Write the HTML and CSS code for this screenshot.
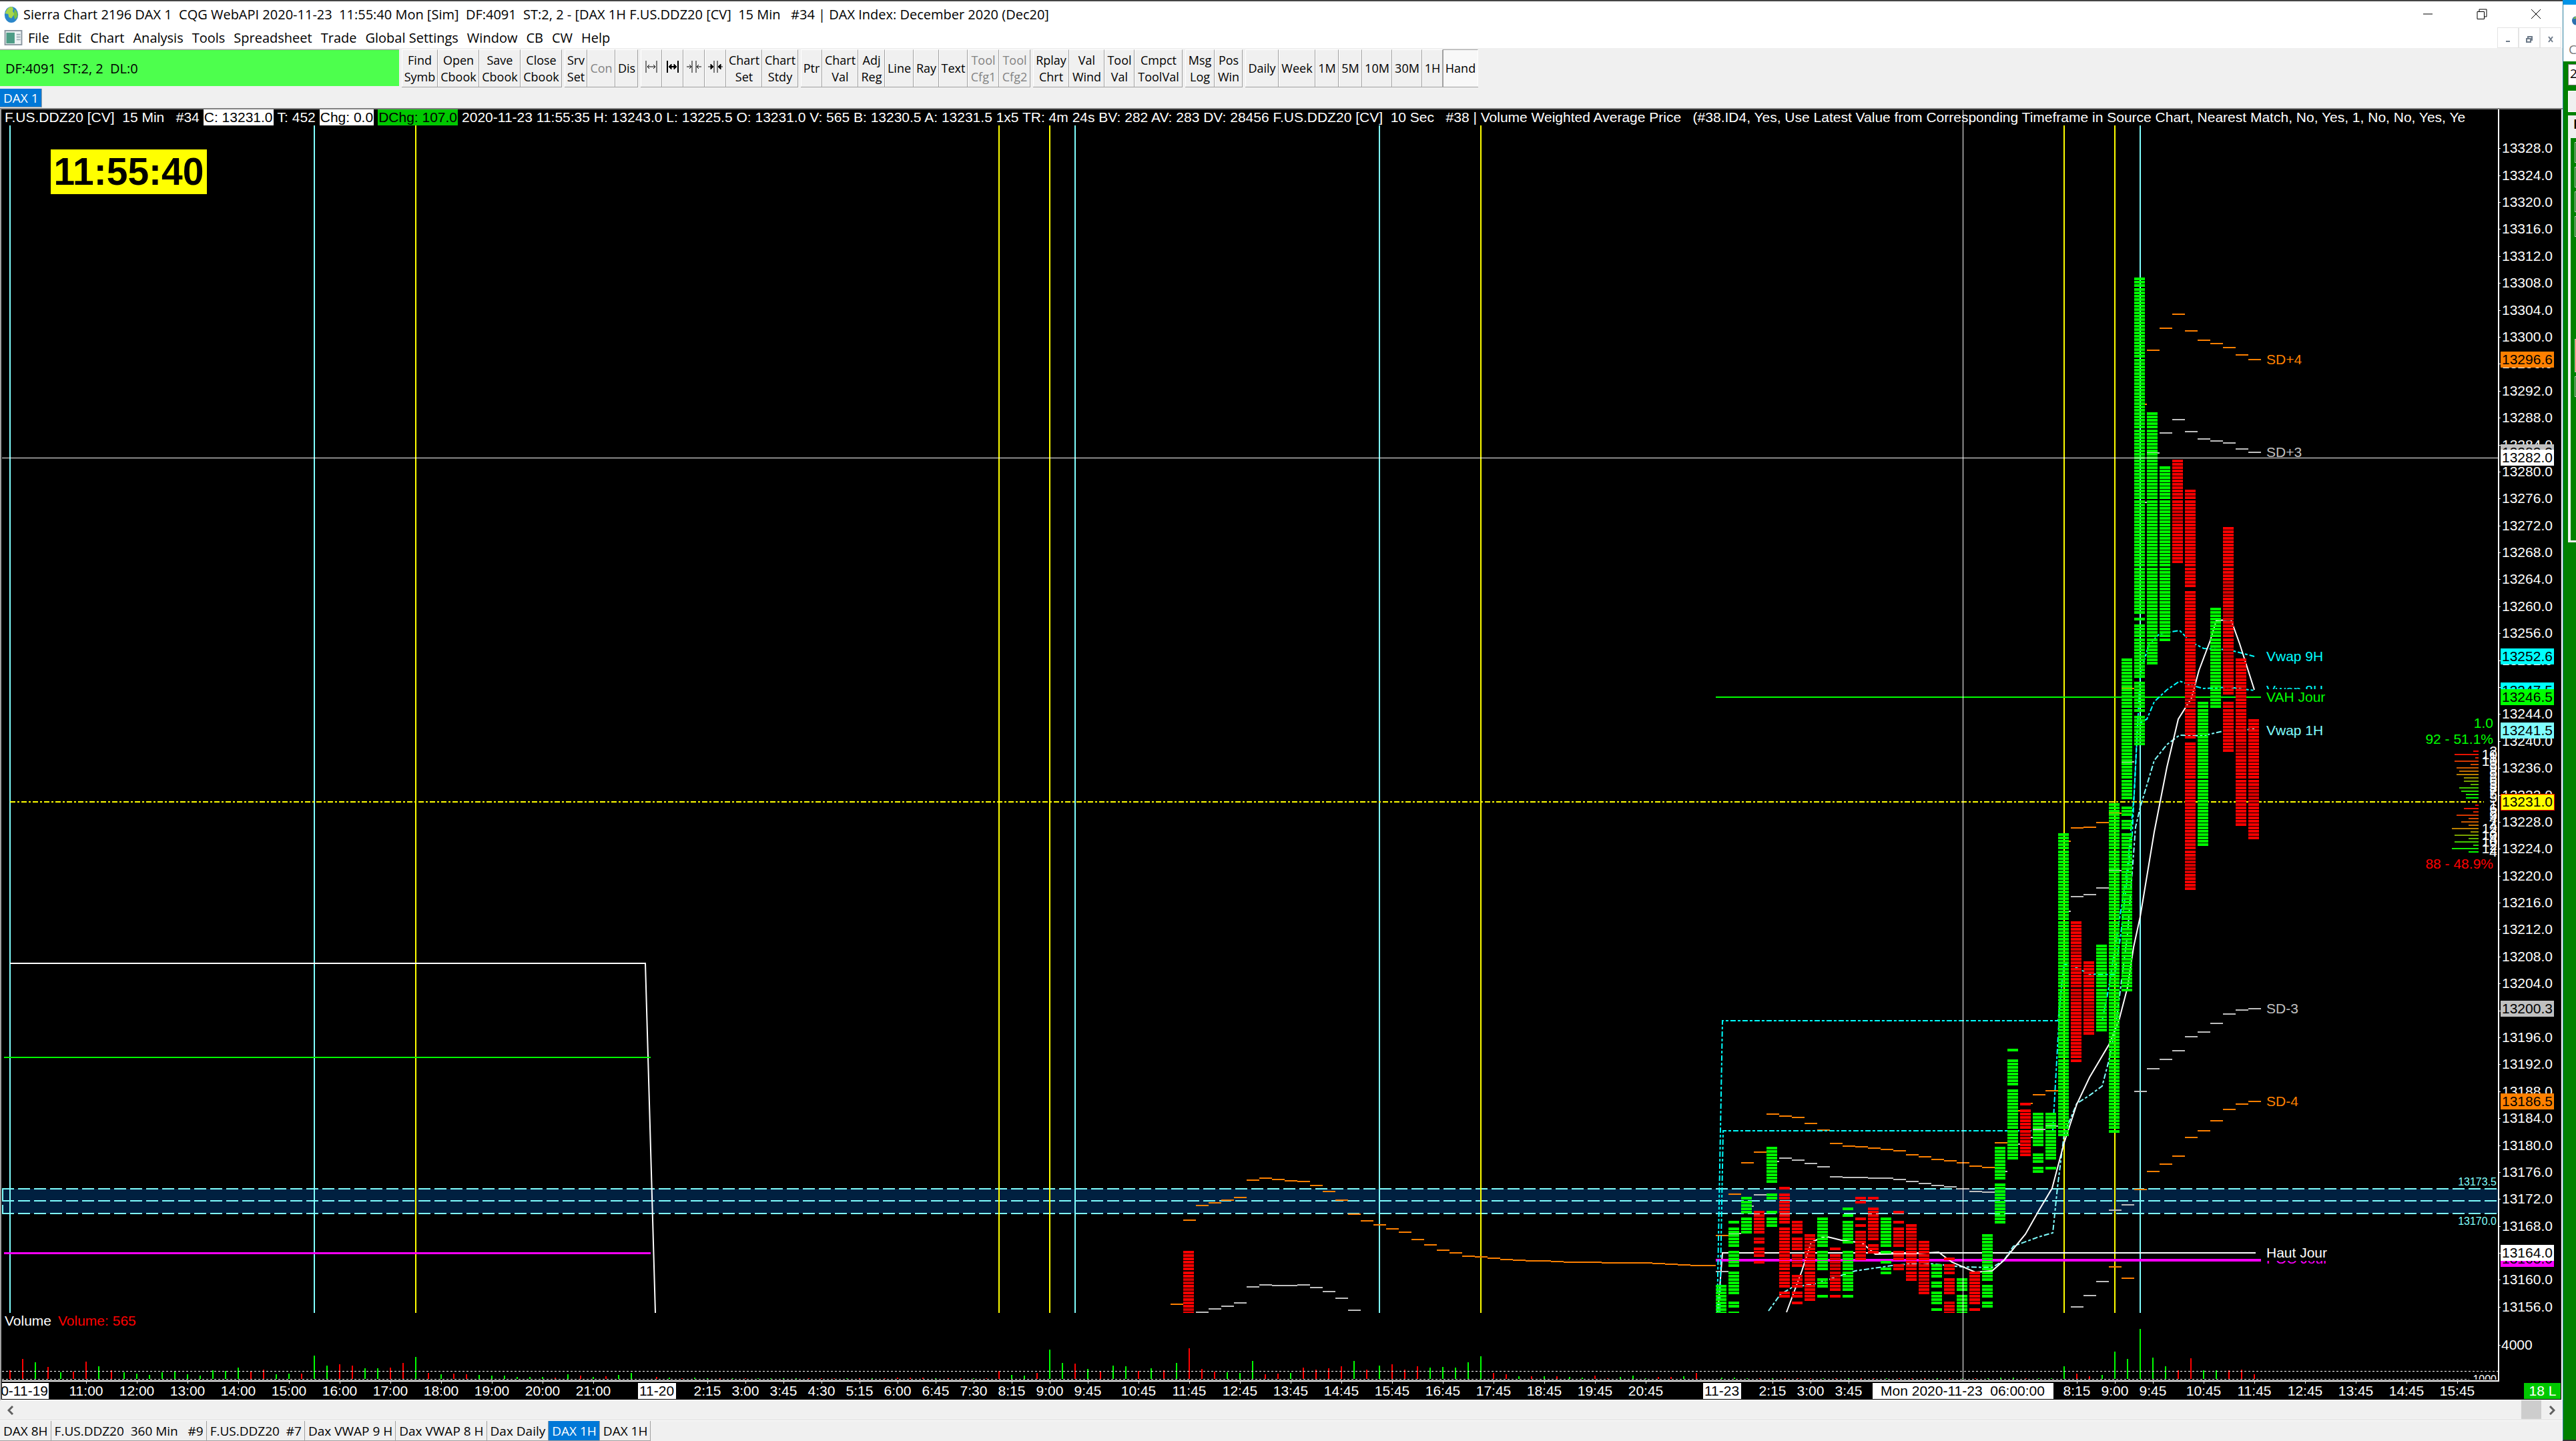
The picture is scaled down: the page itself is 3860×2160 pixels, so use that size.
FILE: index.html
```
<!DOCTYPE html>
<html lang="en">
	<head>
		<meta charset="utf-8">
		<title>Sierra Chart 2196 DAX 1</title>
		<link rel="stylesheet" href="styles.css">
	</head>

	<body>
		<div class="desktop">
			<main class="window">
				<header class="title-bar">
					<svg class="app-icon" viewBox="0 0 24 28">
						<ellipse cx="12" cy="14" rx="11" ry="13" fill="#2b86c9"/>
						<path d="M2 12 Q5 2 12 1 Q17 3 14 8 L17 13 L12 20 L8 18 L7 13 Z" fill="#a8d84a"/>
						<path d="M17 5 Q23 9 22 17 L18 22 L16 16 Z" fill="#7cc142"/>
					</svg>
					<h1 class="title">Sierra Chart 2196 DAX 1  CQG WebAPI 2020-11-23  11:55:40 Mon [Sim]  DF:4091  ST:2, 2 - [DAX 1H F.US.DDZ20 [CV]  15 Min   #34 | DAX Index: December 2020 (Dec20]</h1>
					<div class="window-buttons">
						<button type="button" aria-label="Minimize"><svg viewBox="0 0 16 16"><path d="M1 8h14"/></svg></button>
						<button type="button" aria-label="Restore"><svg viewBox="0 0 16 16"><path d="M1 4.500h10.500v11H1zM4 4V1h11v11h-3"/></svg></button>
						<button type="button" aria-label="Close"><svg viewBox="0 0 16 16"><path d="M1 1l14 14M15 1L1 15"/></svg></button>
					</div>
				</header>

				<nav class="menu-bar">
					<svg class="doc-icon" viewBox="0 0 28 24">
						<rect x="1" y="1" width="26" height="22" fill="#eef3f5" stroke="#8b97a0" stroke-width="2"/>
						<rect x="3" y="4" width="13" height="17" fill="#4d9c86"/>
						<path d="M19 7h6M19 11h6M19 15h6" stroke="#9fb0b8" stroke-width="2"/>
					</svg>
					<button type="button">File</button>
					<button type="button">Edit</button>
					<button type="button">Chart</button>
					<button type="button">Analysis</button>
					<button type="button">Tools</button>
					<button type="button">Spreadsheet</button>
					<button type="button">Trade</button>
					<button type="button">Global Settings</button>
					<button type="button">Window</button>
					<button type="button">CB</button>
					<button type="button">CW</button>
					<button type="button">Help</button>
					<div class="mdi-buttons">
						<button type="button" aria-label="Minimize chart"><svg viewBox="0 0 10 10"><path d="M2 8h6"/></svg></button>
						<button type="button" aria-label="Restore chart"><svg viewBox="0 0 10 10"><path d="M1 4h6v5H1zM3 4V1h6v5H7"/></svg></button>
						<button type="button" aria-label="Close chart"><svg viewBox="0 0 10 10"><path d="M2 1l6 8M8 1L2 9"/></svg></button>
					</div>
				</nav>

				<div class="toolbar">
					<output class="status">DF:4091  ST:2, 2  DL:0</output>
					<div class="group group-book">
						<button type="button">Find<br>Symb</button>
						<button type="button">Open<br>Cbook</button>
						<button type="button">Save<br>Cbook</button>
						<button type="button">Close<br>Cbook</button>
					</div>
					<div class="group group-server">
						<button type="button">Srv<br>Set</button>
						<button type="button" disabled>Con</button>
						<button type="button">Dis</button>
					</div>
					<div class="group group-spacing">
						<button type="button" aria-label="Widen bars"><svg viewBox="0 0 22 18"><path d="M3 0v18M19 0v18M5 9h12M8 6L5 9l3 3M14 6l3 3-3 3"/></svg></button>
						<button type="button" aria-label="Widen bars more"><svg viewBox="0 0 22 18"><path d="M3 0v18M19 0v18M5 9h12" stroke-width="2"/><path d="M9 5L5 9l4 4zM13 5l4 4-4 4z" fill="#000"/></svg></button>
						<button type="button" aria-label="Narrow bars"><svg viewBox="0 0 22 18"><path d="M8 0v18M14 0v18M0 9h7M22 9h-7M4 6l3 3-3 3M18 6l-3 3 3 3"/></svg></button>
						<button type="button" aria-label="Narrow bars more"><svg viewBox="0 0 22 18"><path d="M9 0v18M14 0v18M0 9h8M22 9h-7"/><path d="M4 5l4 4-4 4zM19 5l-4 4 4 4z" fill="#000"/></svg></button>
						<button type="button">Chart<br>Set</button>
						<button type="button">Chart<br>Stdy</button>
					</div>
					<div class="group group-draw">
						<button type="button">Ptr</button>
						<button type="button">Chart<br>Val</button>
						<button type="button">Adj<br>Reg</button>
						<button type="button">Line</button>
						<button type="button">Ray</button>
						<button type="button">Text</button>
						<button type="button" disabled>Tool<br>Cfg1</button>
						<button type="button" disabled>Tool<br>Cfg2</button>
					</div>
					<div class="group group-values">
						<button type="button">Rplay<br>Chrt</button>
						<button type="button">Val<br>Wind</button>
						<button type="button">Tool<br>Val</button>
						<button type="button">Cmpct<br>ToolVal</button>
					</div>
					<div class="group group-log">
						<button type="button">Msg<br>Log</button>
						<button type="button">Pos<br>Win</button>
					</div>
					<div class="group group-period">
						<button type="button">Daily</button>
						<button type="button">Week</button>
						<button type="button">1M</button>
						<button type="button">5M</button>
						<button type="button">10M</button>
						<button type="button">30M</button>
						<button type="button">1H</button>
						<button type="button" class="pressed">Hand</button>
					</div>
				</div>

				<div class="book-tabs">
					<button type="button" class="tab active">DAX 1</button>
				</div>

				<section class="chart">
					<div class="caption"><span>F.US.DDZ20 [CV]  15 Min   #34</span><span class="tag white">C: 13231.0</span><span>T: 452</span><span class="tag white">Chg: 0.0</span><span class="tag green">DChg: 107.0</span><span>2020-11-23 11:55:35 H: 13243.0 L: 13225.5 O: 13231.0 V: 565 B: 13230.5 A: 13231.5 1x5 TR: 4m 24s BV: 282 AV: 283 DV: 28456 F.US.DDZ20 [CV]  10 Sec   #38 | Volume Weighted Average Price   (#38.ID4, Yes, Use Latest Value from Corresponding Timeframe in Source Chart, Nearest Match, No, Yes, 1, No, No, Yes, Ye</span></div>
					<svg class="plot" id="plot" viewBox="2 188 3836 1910" preserveAspectRatio="none"></svg>
				</section>

				<div class="scroll">
					<button type="button" aria-label="Scroll left"><svg viewBox="0 0 10 14"><path d="M8 1L2 7l6 6"/></svg></button>
					<div class="track"><div class="thumb"></div></div>
					<button type="button" aria-label="Scroll right"><svg viewBox="0 0 10 14"><path d="M2 1l6 6-6 6"/></svg></button>
				</div>

				<div class="chart-tabs">
					<button type="button" class="tab">DAX 8H</button>
					<button type="button" class="tab">F.US.DDZ20  360 Min   #9</button>
					<button type="button" class="tab">F.US.DDZ20  #7</button>
					<button type="button" class="tab">Dax VWAP 9 H</button>
					<button type="button" class="tab">Dax VWAP 8 H</button>
					<button type="button" class="tab">Dax Daily</button>
					<button type="button" class="tab active">DAX 1H</button>
					<button type="button" class="tab">DAX 1H</button>
				</div>
			</main>

			<aside class="side-window">
				<div class="side-title">
					<svg viewBox="0 0 12 28"><ellipse cx="11" cy="14" rx="11" ry="13" fill="#2b6fae"/><path d="M3 9Q7 2 12 2v5z" fill="#8cc63f"/></svg>
					<span>C</span>
				</div>
				<div class="side-field">2</div>
				<div class="side-button"></div>
				<div class="side-panel">
					<div class="side-tab">N</div>
					<div class="side-box"></div>
					<div class="side-box"></div>
					<div class="side-box"></div>
					<div class="side-box"></div>
					<div class="side-box alert"></div>
					<div class="side-box"></div>
				</div>
			</aside>
		</div>

		<script src="chart.js"></script>
	</body>
</html>
```
FILE: styles.css
```
* {
	box-sizing: border-box;
}

body {
	margin: 0;
	font-family: "Open Sans", "Noto Sans", sans-serif;
	font-size: 19px;
	color: #000;
}

button {
	margin: 0;
	padding: 0;
	border: none;
	background: none;
	font: inherit;
	color: inherit;
}

.desktop {
	display: flex;
	height: 100vh;
	background: #f0f0f0;
}

.window {
	flex: 1;
	min-width: 0;
	display: flex;
	flex-direction: column;
	border-top: 2px solid #444;
}

/* title and menu */
.title-bar {
	display: flex;
	align-items: center;
	height: 39px;
	padding-left: 4px;
	background: #fff;
}

.app-icon {
	width: 26px;
	height: 26px;
	margin-right: 5px;
}

.title {
	flex: 1;
	margin: 0;
	font-size: 20px;
	font-weight: normal;
	white-space: pre;
	overflow: hidden;
}

.window-buttons {
	display: flex;
}

.window-buttons button {
	width: 81px;
	height: 36px;
}

.window-buttons svg {
	width: 16px;
	height: 16px;
	fill: none;
	stroke: #000;
}

.menu-bar {
	display: flex;
	align-items: center;
	gap: 13px;
	height: 31px;
	padding-left: 6px;
	background: #fff;
	font-size: 20px;
}

.doc-icon {
	width: 28px;
	height: 23px;
	margin-right: -5px;
}

.mdi-buttons {
	display: flex;
	margin-left: auto;
	padding-right: 2px;
}

.mdi-buttons button {
	width: 32px;
	height: 31px;
	border: 1px solid #e4e4e4;
}

.mdi-buttons svg {
	width: 10px;
	height: 10px;
	fill: none;
	stroke: #6e7b8a;
	stroke-width: 2;
}

/* toolbar */
.toolbar {
	display: flex;
	gap: 4px;
	height: 60px;
	padding: 2px 0 1px;
	font-size: 18px;
	line-height: 25px;
}

.status {
	display: flex;
	align-items: center;
	width: 598px;
	margin-bottom: 2px;
	padding-left: 8px;
	border-top: 1px solid #999;
	background: #4dff4d;
	font-size: 20px;
	white-space: pre;
}

.group {
	display: grid;
	border-bottom: 1px solid #a0a0a0;
}

.group button {
	overflow: hidden;
	white-space: nowrap;
	border-top: 1px solid #fff;
	border-left: 1px solid #fff;
	border-right: 1px solid #a0a0a0;
}

.group button:disabled {
	color: #838383;
}

.group .pressed {
	background: #f8f8f8;
	border-top-color: #a0a0a0;
	border-left-color: #a0a0a0;
	border-right-color: #fff;
}

.group svg {
	width: 22px;
	height: 18px;
	fill: none;
	stroke: #000;
}

.group-book {
	grid-template-columns: 54px repeat(3, 62px);
}

.group-server {
	grid-template-columns: 34px 42px 34px;
}

.group-spacing {
	grid-template-columns: repeat(4, 32px) 54px 54px;
}

.group-draw {
	grid-template-columns: 32px 54px 40px 43px 38px 43px 47px 47px;
}

.group-values {
	grid-template-columns: 54px 53px 45px 72px;
}

.group-log {
	grid-template-columns: 44px 42px;
}

.group-period {
	grid-template-columns: 50px 55px 35px 35px 45px 45px 31px 53px;
}

/* tabs */
.book-tabs {
	display: flex;
	height: 32px;
	padding: 1px 0;
	border-bottom: 2px solid #808080;
}

.tab {
	padding: 0 4px 0 5px;
	white-space: pre;
	border-right: 1px solid #a0a0a0;
	border-bottom: 1px solid #a0a0a0;
}

.tab.active {
	background: #0078d7;
	color: #fff;
}

.chart-tabs {
	display: flex;
	height: 31px;
	border-top: 1px solid #fff;
}

/* chart */
.chart {
	flex: 1;
	min-height: 0;
	display: flex;
	flex-direction: column;
	background: #000;
	border-left: 2px solid #a0a0a0;
	border-right: 2px solid #fff;
	border-bottom: 1px solid #fff;
	font-family: "Liberation Sans", Arial, sans-serif;
	font-size: 21px;
}

.caption {
	display: flex;
	gap: 6px;
	height: 24px;
	margin-right: 95px;
	padding-left: 5px;
	line-height: 24px;
	color: #fff;
	white-space: pre;
	overflow: hidden;
}

.tag {
	padding: 0 1px;
	color: #000;
}

.tag.white {
	background: #fff;
}

.tag.green {
	background: #00c800;
}

.plot {
	flex: 1;
	min-height: 0;
	width: 100%;
	overflow: visible;
}

.plot text {
	font-family: "Liberation Sans", Arial, sans-serif;
	font-size: 21px;
	white-space: pre;
}

.plot .small {
	font-size: 16px;
}

.plot .clock {
	font-size: 57px;
	font-weight: bold;
}

.plot rect,
.plot line {
	shape-rendering: crispEdges;
}

/* scroll bar */
.scroll {
	display: flex;
	height: 30px;
	border-bottom: 1px solid #dcdcdc;
}

.scroll button {
	width: 32px;
}

.scroll svg {
	width: 10px;
	height: 14px;
	fill: none;
	stroke: #606060;
	stroke-width: 3;
}

.track {
	flex: 1;
	display: flex;
	justify-content: flex-end;
}

.thumb {
	width: 30px;
	height: 28px;
	background: #cdcdcd;
}

/* window on the right edge */
.side-window {
	width: 20px;
	overflow: hidden;
	background: #008000;
	border-left: 1px solid #2b7f9e;
	border-top: 7px solid #0094e8;
	border-bottom: 2px solid #333;
}

.side-title {
	display: flex;
	flex-direction: column;
	align-items: flex-end;
	height: 85px;
	padding-top: 12px;
	background: #fff;
	color: #777;
}

.side-title svg {
	width: 6px;
	height: 24px;
}

.side-title span {
	width: 11px;
	margin-top: 18px;
}

.side-field,
.side-button {
	height: 32px;
	margin: 4px 0 8px 7px;
	padding-left: 2px;
	background: #fff;
	border: 1px solid #777;
	border-right: none;
}

.side-button {
	margin-bottom: 5px;
	background: #f0f0f0;
	border-color: #fff;
}

.side-panel {
	display: flex;
	flex-direction: column;
	gap: 6px;
	height: 640px;
	margin-left: 7px;
	border-left: 4px solid #f0f0f0;
	border-bottom: 3px solid #f0f0f0;
}

.side-tab {
	height: 34px;
	padding-left: 4px;
	background: #f0f0f0;
	font-weight: bold;
}

.side-box {
	height: 31px;
	margin-left: 6px;
	border: 1px solid #c8c8c8;
	border-right: none;
}

.side-box.alert {
	height: 50px;
	margin-top: 147px;
	background: #ff7f50;
}
```
FILE: chart.js
```
const plot = document.getElementById('plot');
const NS = 'http://www.w3.org/2000/svg';

const GREEN = '#00ff00';
const RED = '#ff0000';
const YELLOW = '#ffff00';
const CYAN = '#00ffff';
const PALE = '#80ffff';
const ORANGE = '#ff8000';
const GRAY = '#c0c0c0';
const WHITE = '#ffffff';
const PINK = '#ff00ff';

const TICK = 5.048;
const BOTTOM = 1968;
const AXIS_X = 3743;

// centre of bar number i, and height of a price
const barX = i => 15 + 19 * i;
const priceY = p => 222.3 + (13328 - p) * TICK * 2;

function add(name, attrs, content) {
	const el = document.createElementNS(NS, name);
	for (const key in attrs) el.setAttribute(key, attrs[key]);
	if (content !== undefined) el.textContent = content;
	plot.appendChild(el);
	return el;
}

function rect(x, y, width, height, fill) {
	return add('rect', { x, y, width, height, fill });
}

function line(x1, y1, x2, y2, stroke, width = 1, dash = '') {
	return add('line', { x1, y1, x2, y2, stroke, 'stroke-width': width, 'stroke-dasharray': dash });
}

function path(points, stroke, dash = '') {
	add('polyline', { points: points, fill: 'none', stroke, 'stroke-width': 2, 'stroke-dasharray': dash });
}

function label(x, y, text, fill, anchor = 'start', cls = '') {
	return add('text', { x, y: y + (cls === 'small' ? 6 : 7), fill, 'text-anchor': anchor, class: cls }, text);
}

// zone
rect(3, 1782, 3740, 37, '#002040');
[1782, 1800, 1819].forEach(y => line(3, y, AXIS_X, y, PALE, 2, '18 6'));
line(4, 1782, 4, 1819, PALE, 2, '18 6');

// session lines
[0, 24, 84, 108, 168].forEach(i => line(barX(i), 188, barX(i), BOTTOM, PALE, 2));
[32, 78, 82, 116, 162, 166].forEach(i => line(barX(i), 188, barX(i), BOTTOM, YELLOW, 2));

// levels of the day
path('15,1444 967,1444 982,1968', WHITE);
line(6, 1585, 975, 1585, GREEN, 2);
line(6, 1878, 975, 1878, PINK, 3);
line(2571, 1045, 3388, 1045, GREEN, 2);
path('2574,1968 2581,1878 3380,1878', WHITE);
line(2571, 1889, 3388, 1889, PINK, 4);
line(15, 1202, 3722, 1202, YELLOW, 2, '8 3 3 3');

// deviation bands, first bar then one height per bar
const bands = [
	[ORANGE, 92, [1955, 1829, 1807, 1803, 1799, 1795, 1769, 1766, 1768, 1770, 1771, 1777, 1786, 1799, 1820, 1830, 1836, 1842, 1847, 1858, 1866, 1874, 1878, 1883, 1884, 1886, 1888, 1889, 1890, 1890, 1891, 1892, 1892, 1892, 1893, 1893, 1893, 1893, 1894, 1895, 1896, 1897, 1897]],
	[ORANGE, 135, [1852, 1790, 1743, 1727, 1670, 1673, 1675, 1684, 1694, 1714, 1718, 1719, 1721, 1723, 1725, 1731, 1734, 1738, 1740, 1743, 1748, 1750, 1713, 1665, 1654, 1641, 1635, 1261, 1241, 1240, 1233, 1219, 1032, 606, 525, 492, 471, 496, 510, 515, 521, 532, 539]],
	[ORANGE, 166, [1899, 1916, 1783, 1756, 1745, 1733, 1705, 1695, 1680, 1663, 1655, 1651]],
	[GRAY, 94, [1967, 1962, 1958, 1953, 1929, 1926, 1927, 1927, 1926, 1930, 1936, 1946, 1964]],
	[GRAY, 135, [1906, 1849, 1808, 1791, 1741, 1736, 1739, 1744, 1749, 1764, 1765, 1765, 1766, 1766, 1768, 1771, 1774, 1777, 1779, 1782, 1786, 1787, 1756, 1715, 1705, 1693, 1688, 1366, 1344, 1341, 1331, 1305, 1142, 753, 679, 649, 629, 647, 658, 661, 664, 673, 678]],
	[GRAY, 163, [1959, 1942, 1921, 1814, 1806, 1636, 1602, 1588, 1575, 1554, 1547, 1534, 1520, 1514, 1512]]
];

bands.forEach(([color, first, ys]) => {
	ys.forEach((y, k) => rect(barX(first + k) - 9, y - 1, 19, 2, color));
});

// vwaps and average
path('2573,1968 2581,1530 3084,1530 3090,1470 3093,1445 3112,1451 3131,1460 3169,1461 3178,1400 3195,1250 3203,1085 3217,1078 3228,1052 3247,1034 3266,1021 3283,1027 3302,1032 3340,1030 3378,1035', CYAN, '8 3 4 3');
path('2577,1968 2582,1695 3076,1695 3087,1500 3090,1470', CYAN, '8 3 4 3');
path('3150,1530 3160,1480 3188,1300 3198,1190 3207,1010 3220,966 3236,950 3266,945 3283,962 3302,972 3340,974 3378,984', CYAN, '8 3 4 3');
path('2650,1965 2668,1940 2685,1930 2721,1924 2759,1912 2780,1905 2835,1897 2880,1893 2940,1899 2985,1900 3003,1889 3017,1868 3055,1854 3076,1848 3083,1780 3093,1700 3112,1654 3131,1642 3150,1628 3160,1590 3170,1540 3188,1400 3200,1240 3207,1210 3228,1140 3247,1116 3266,1102 3300,1103 3331,1096 3378,1093', PALE, '8 3 4 3');
path('2677,1967 2700,1905 2714,1862 2735,1853 2759,1859 2790,1863 2810,1880 2870,1879 2905,1877 2925,1892 2960,1907 2985,1905 3003,1889 3035,1850 3056,1813 3075,1781 3093,1713 3112,1655 3131,1615 3160,1566 3175,1530 3188,1480 3197,1420 3207,1374 3228,1247 3247,1150 3264,1078 3284,1046 3295,1005 3312,960 3321,930 3343,929 3356,965 3378,1034', WHITE);

// bars: number, color, traded ranges from top to bottom, ranges in the darker shade
const bars = [
	[93, 'r', [[1875, 1968]], [[1916, 1924], [1931, 1935], [1941, 1945], [1961, 1965]]],
	[135, 'g', [[1926, 1968]]],
	[136, 'g', [[1830, 1834], [1840, 1869], [1875, 1900], [1906, 1939], [1951, 1959], [1966, 1968]]],
	[137, 'g', [[1795, 1818], [1825, 1848]]],
	[138, 'r', [[1815, 1848], [1855, 1863], [1870, 1884], [1891, 1895]], [[1855, 1859]]],
	[139, 'g', [[1719, 1772], [1790, 1798], [1815, 1819], [1825, 1839]]],
	[140, 'r', [[1779, 1783], [1790, 1833], [1840, 1929], [1936, 1944]]],
	[141, 'r', [[1830, 1848], [1855, 1873], [1880, 1900], [1911, 1929], [1936, 1944], [1951, 1955]], [[1885, 1894]]],
	[142, 'r', [[1850, 1949]], [[1860, 1869]]],
	[143, 'g', [[1825, 1868], [1875, 1904], [1916, 1929], [1941, 1945]]],
	[144, 'r', [[1870, 1874], [1880, 1934], [1941, 1945]], [[1885, 1914]]],
	[145, 'g', [[1810, 1814], [1820, 1824], [1830, 1863], [1875, 1934], [1941, 1945]]],
	[146, 'r', [[1795, 1803], [1825, 1829], [1835, 1839], [1845, 1889]], [[1850, 1859]]],
	[147, 'r', [[1795, 1799], [1810, 1858], [1865, 1878]], [[1845, 1854]]],
	[148, 'g', [[1825, 1868], [1875, 1879], [1891, 1895], [1900, 1909]]],
	[149, 'r', [[1815, 1819], [1830, 1834], [1840, 1868], [1875, 1889], [1896, 1904]], [[1855, 1864]]],
	[150, 'r', [[1835, 1919]], [[1850, 1869]]],
	[151, 'r', [[1860, 1939]], [[1915, 1924]]],
	[152, 'g', [[1896, 1914], [1921, 1929], [1936, 1954], [1961, 1965]]],
	[153, 'r', [[1885, 1889], [1896, 1909], [1916, 1939], [1951, 1968]], [[1951, 1955]]],
	[154, 'g', [[1916, 1934], [1941, 1968]]],
	[155, 'r', [[1906, 1954], [1961, 1965]]],
	[156, 'g', [[1850, 1919], [1926, 1944], [1951, 1959]]],
	[157, 'g', [[1719, 1767], [1774, 1833]]],
	[158, 'g', [[1572, 1576], [1587, 1627], [1633, 1738]]],
	[159, 'r', [[1653, 1657], [1663, 1733]], [[1698, 1707]]],
	[160, 'g', [[1668, 1718], [1729, 1742], [1749, 1757]]],
	[161, 'g', [[1668, 1738], [1749, 1753]]],
	[162, 'g', [[1249, 1703]]],
	[163, 'r', [[1380, 1592]], [[1416, 1430], [1476, 1500]]],
	[164, 'r', [[1441, 1551]], [[1501, 1525]]],
	[165, 'g', [[1416, 1546]]],
	[166, 'g', [[1204, 1698]]],
	[167, 'g', [[986, 1198], [1209, 1223], [1229, 1243], [1249, 1485]]],
	[168, 'g', [[416, 920], [926, 930], [936, 1016], [1022, 1066], [1072, 1117]]],
	[169, 'g', [[618, 995]]],
	[170, 'g', [[698, 960]]],
	[171, 'r', [[688, 845]], [[764, 783]]],
	[172, 'r', [[734, 879], [885, 1107], [1113, 1334]], [[1046, 1060], [1283, 1307]]],
	[173, 'g', [[1052, 1268]]],
	[174, 'g', [[911, 1061]]],
	[175, 'r', [[789, 1041], [1052, 1127]], [[869, 893], [909, 928], [970, 990]]],
	[176, 'r', [[986, 1238]], [[1112, 1131]]],
	[177, 'r', [[1077, 1258]], [[1178, 1202]]]
];

const rowOf = y => Math.round((y - 219) / TICK);

function bricks(i, top, bottom, color) {
	for (let row = rowOf(top); row <= rowOf(bottom - 4); row++) {
		const y = Math.round(219.5 + row * TICK);
		rect(barX(i) - 9, y, 16, Math.min(4, BOTTOM - y), color);
	}
}

bars.forEach(([i, side, ranges, dark = []]) => {
	ranges.forEach(([a, b]) => bricks(i, a, b, side === 'g' ? GREEN : RED));
	dark.forEach(([a, b]) => bricks(i, a, b, '#d80000'));
});

// volume, one entry per bar
const volumes = 'r13 r30 g25 r18 g10 r11 r26 g19 r13 g10 g8 g6 g10 g11 g7 g5 g13 g12 g17 r11 r14 g7 g8 r8 g35 g20 r22 r20 g16 g16 r17 r24 g33 r9 g7 r8 r7 g6 g5 g5 g3 g3 g3 r2 g7 r5 g3 r4 g6 g9 r0 r3 g2 r1 g2 g1 r1 g1 r1 g1 g1 g1 g1 r1 r1 r1 g1 r1 ' +
	'g1 r1 r2 r2 r2 g1 r1 r1 g1 r1 r12 g6 g5 r9 g44 g24 r23 g15 r11 g20 g19 r12 g16 r13 g24 r46 r15 r11 g10 g9 g27 r7 r8 g9 r17 r14 r16 r19 g27 r14 g20 r22 r14 r19 g17 g18 g17 g25 g34 r9 r7 g4 r4 g4 r4 g3 g2 r5 r1 g3 g5 g1 r3 r3 g4 r9 r0 ' +
	'g2 g2 g1 r1 g1 r1 r1 r1 g1 r1 g1 r1 r1 g1 r1 r1 r1 g1 r1 g1 r1 g1 g2 g2 r1 g1 g1 g19 r8 r4 g6 g41 g30 g75 g32 g19 r13 r31 g13 g13 r13 r14 r7';

volumes.split(' ').forEach((v, i) => {
	const h = Number(v.slice(1));
	rect(barX(i) - 1, 2067 - h, 2, h, v[0] === 'g' ? GREEN : RED);
});

line(3, 2055, AXIS_X, 2055, WHITE, 1, '3 3');
line(3, 2067, AXIS_X, 2067, WHITE, 1, '3 3');
rect(3700, 2060, 43, 8, '#000');
label(3741, 2067, '1000', WHITE, 'end', 'small');
rect(3700, 2068, 43, 8, '#000');
label(7, 1980, 'Volume', WHITE);
label(87, 1980, 'Volume: 565', RED);

// clock
rect(76, 224, 234, 67, YELLOW);
add('text', { x: 193, y: 277, 'text-anchor': 'middle', class: 'clock' }, '11:55:40');

// labels at the end of the studies
label(3396, 539, 'SD+4', ORANGE);
label(3396, 678, 'SD+3', GRAY);
label(3396, 984, 'Vwap 9H', CYAN);
label(3396, 1035, 'Vwap 8H', CYAN);
rect(3394, 1033, 95, 24, '#000');
label(3396, 1045, 'VAH Jour', GREEN);
label(3396, 1095, 'Vwap 1H', PALE);
label(3396, 1512, 'SD-3', GRAY);
label(3396, 1651, 'SD-4', ORANGE);
label(3396, 1887, 'POC Jour', PINK);
rect(3394, 1866, 95, 24, '#000');
label(3396, 1878, 'Haut Jour', WHITE);
label(3741, 1771, '13173.5', PALE, 'end', 'small');
label(3741, 1830, '13170.0', PALE, 'end', 'small');

// depth of market
const asks = [24, 108, 15, 108, 36, 99, 87, 99, 66, 66, 36, 87, 78, 57, 57];
const bids = [15, 66, 24, 99, 45, 78, 45, 120, 36, 108, 45, 108, 24, 120, 45];

function depth(sizes, top) {
	sizes.forEach((size, k) => {
		const y = top + 5 * k;
		const t = k / (sizes.length - 1);
		const fill = `rgb(${Math.round(Math.min(1, 2 - 2 * t) * (240 - 110 * t))}, ${Math.round(255 * t)}, 0)`;
		rect(3714 - size / 3, y - 1, Math.round(size / 3), 2, fill);
		label(3742, y, Math.floor(size / 9 * 0.9), WHITE, 'end');
	});
}

depth(asks, 1126);
depth(bids, 1207);
label(3736, 1084, '1.0', GREEN, 'end');
label(3736, 1108, '92 - 51.1%', GREEN, 'end');
label(3736, 1295, '88 - 48.9%', RED, 'end');

// price axis
line(AXIS_X + 1, 164, AXIS_X + 1, 2071, WHITE, 2);
for (let p = 13328; p >= 13156; p -= 4) {
	rect(AXIS_X, Math.round(priceY(p)), 4, 1, WHITE);
	label(3749, Math.round(priceY(p)), p.toFixed(1), WHITE);
}
rect(AXIS_X, 2016, 4, 1, WHITE);
label(3748, 2016, '4000', WHITE);

[
	['13296.6', 539, ORANGE],
	['13283.3', 678, GRAY],
	['13282.0', 686, WHITE],
	['13252.6', 984, CYAN],
	['13247.5', 1035, CYAN],
	['13246.5', 1045, GREEN],
	['13241.5', 1095, PALE],
	['13231.0', 1202, YELLOW],
	['13200.3', 1512, GRAY],
	['13186.5', 1651, ORANGE],
	['13163.0', 1887, PINK],
	['13164.0', 1878, WHITE]
].forEach(([price, y, color]) => {
	const box = rect(3747, y - 12, 80, 24, color);
	if (color === YELLOW) box.setAttribute('stroke', RED);
	label(3749, y, price, '#000');
});

// time axis
rect(3, 2069, 3742, 2, WHITE);
function hours(first, step, names) {
	names.split(' ').forEach((name, k) => {
		const x = barX(first + step * k);
		rect(x, 2071, 1, 3, WHITE);
		label(x, 2085, name, WHITE, 'middle');
	});
}

hours(6, 4, '11:00 12:00 13:00 14:00 15:00 16:00 17:00 18:00 19:00 20:00 21:00');
hours(55, 3, '2:15 3:00 3:45 4:30 5:15 6:00 6:45 7:30 8:15 9:00 9:45');
hours(89, 4, '10:45 11:45 12:45 13:45 14:45 15:45 16:45 17:45 18:45 19:45 20:45');
hours(139, 3, '2:15 3:00 3:45');
hours(163, 3, '8:15 9:00 9:45');
hours(173, 4, '10:45 11:45 12:45 13:45 14:45 15:45');

rect(3, 2073, 70, 24, WHITE);
label(72, 2085, '0-11-19', '#000', 'end');
rect(956, 2073, 57, 24, WHITE);
label(984, 2085, '11-20', '#000', 'middle');
rect(2552, 2073, 57, 24, WHITE);
label(2580, 2085, '11-23', '#000', 'middle');
rect(2806, 2073, 271, 24, WHITE);
label(2941, 2085, 'Mon 2020-11-23  06:00:00', '#000', 'middle');
rect(3782, 2073, 55, 24, '#00c800');
label(3810, 2085, '18 L', WHITE, 'middle');

// crosshair
rect(3, 686, 3741, 1, WHITE);
rect(2941, 165, 1, 1904, WHITE);
```
